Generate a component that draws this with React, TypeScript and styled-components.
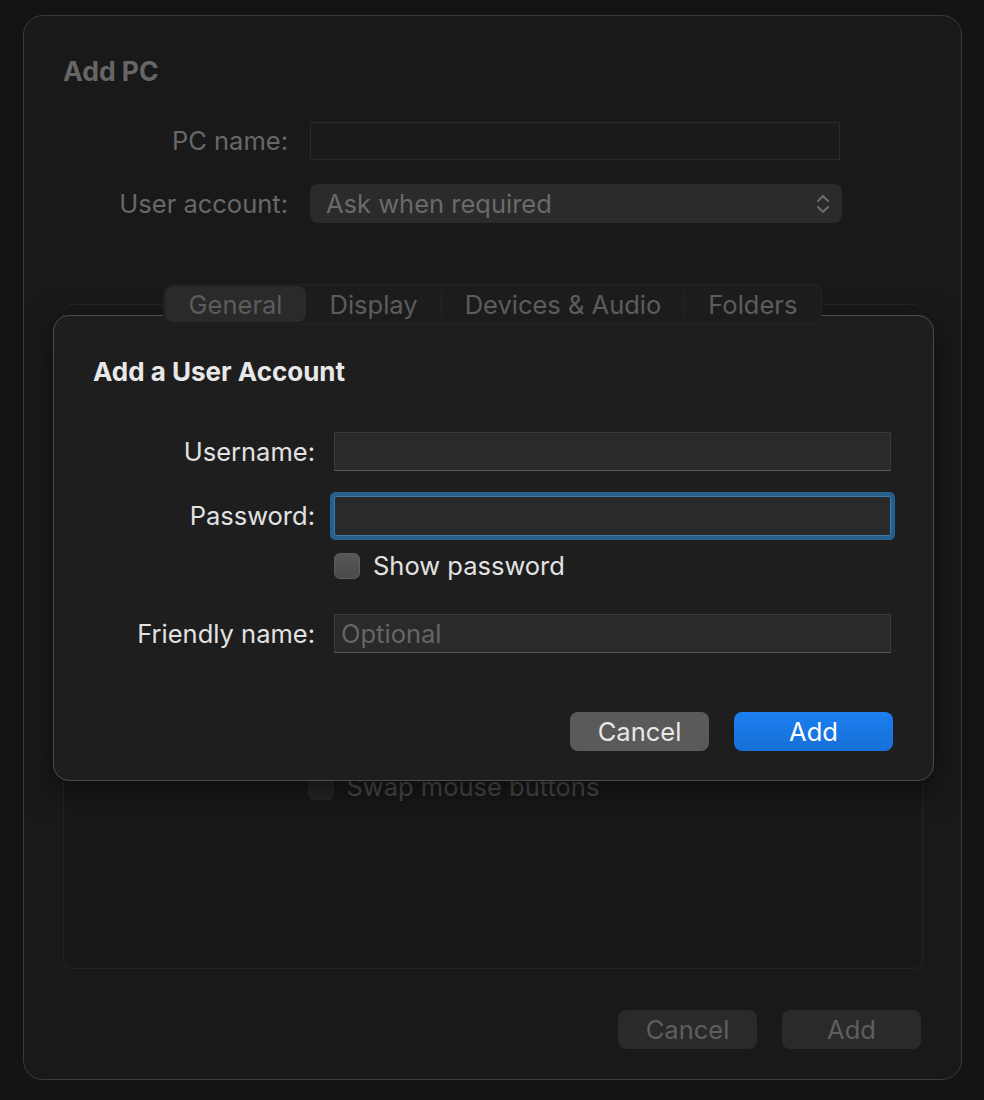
import React from "react";
import styled, { createGlobalStyle } from "styled-components";

const Global = createGlobalStyle`
  html, body { margin: 0; padding: 0; background: #141414; }
  body { font-family: Inter, "Noto Sans", "Liberation Sans", sans-serif; -webkit-font-smoothing: antialiased; }
  * { box-sizing: border-box; }
`;

const BODY = "25.5px";

const Page = styled.div`
  width: 984px;
  height: 1100px;
  padding: 15px 22px 0 23px;
  background: #141414;
`;

const Window = styled.div`
  position: relative;
  width: 939px;
  height: 1065px;
  border-radius: 20px;
  background: #191919;
  border: 1px solid #3b3b3b;
  padding: 40px 39px 0 39px;
  display: flex;
  flex-direction: column;
`;

const WindowTitle = styled.div`
  font-size: 26.5px;
  line-height: 30px;
  font-weight: 700;
  color: #666;
`;

const MainForm = styled.div`
  margin-top: 36px;
  display: grid;
  grid-template-columns: 225px 530px;
  column-gap: 22px;
  row-gap: 24px;
  align-items: center;
`;

const DimLabel = styled.div`
  text-align: right;
  font-size: ${BODY};
  line-height: 30px;
  color: #686868;
`;

const DimField = styled.div`
  height: 38px;
  background: #1b1b1b;
  border: 1px solid #2a2a2a;
`;

const DimSelect = styled.div`
  height: 39px;
  width: 532px;
  border-radius: 8px;
  background: #2b2b2b;
  display: flex;
  align-items: center;
  justify-content: space-between;
  padding: 0 11px 0 16px;
  font-size: ${BODY};
  color: #6a6a6a;
`;

const TabArea = styled.div`
  margin-top: 61px;
  display: flex;
  flex-direction: column;
  align-items: center;
`;

const Segmented = styled.div`
  position: relative;
  z-index: 1;
  display: flex;
  align-items: stretch;
  height: 40px;
  margin-bottom: -20px;
  padding: 1px;
  border-radius: 9px;
  background: #1c1c1c;
  border: 1px solid #232323;
`;

const Segment = styled.div<{ $active?: boolean; $sep?: boolean }>`
  display: flex;
  align-items: center;
  padding: 0 23px;
  font-size: ${BODY};
  color: #5c5c5c;
  border-radius: 8px;
  background: ${(p) => (p.$active ? "#2a2a2a" : "transparent")};
  border-left: 1px solid ${(p) => (p.$sep ? "#262626" : "transparent")};
`;

const Panel = styled.div`
  width: 860px;
  height: 665px;
  border-radius: 10px;
  background: #181818;
  border: 1px solid #242424;
  padding: 469px 0 0 244px;
`;

const CheckRow = styled.div<{ $dim?: boolean }>`
  display: flex;
  align-items: center;
  gap: 13px;
  height: 26px;
  font-size: ${BODY};
  line-height: 26px;
  color: ${(p) => (p.$dim ? "#4a4a4a" : "#e2e2e2")};
`;

const Check = styled.div<{ $dim?: boolean }>`
  width: 26px;
  height: 26px;
  border-radius: 6px;
  background: ${(p) =>
    p.$dim ? "#262626" : "linear-gradient(#575757, #4b4b4b)"};
  border: 1px solid ${(p) => (p.$dim ? "#2a2a2a" : "#5e5e5e")};
`;

const Footer = styled.div`
  margin-top: 41px;
  display: flex;
  justify-content: flex-end;
  gap: 25px;
  padding-right: 1px;
`;

const DimButton = styled.div`
  width: 139px;
  height: 39px;
  border-radius: 8px;
  background: #2a2a2a;
  color: #5e5e5e;
  font-size: ${BODY};
  display: flex;
  align-items: center;
  justify-content: center;
`;

const Sheet = styled.div`
  position: absolute;
  left: 29px;
  top: 299px;
  width: 881px;
  height: 466px;
  border-radius: 16px;
  background: #1e1e1e;
  border: 1px solid #4c4c4c;
  box-shadow: 0 10px 30px rgba(0, 0, 0, 0.5);
  padding: 41px 40px 0 39px;
  display: flex;
  flex-direction: column;
`;

const SheetTitle = styled.div`
  font-size: 26px;
  line-height: 30px;
  font-weight: 700;
  color: #e8e8e8;
`;

const SheetForm = styled.div`
  margin-top: 45px;
  display: grid;
  grid-template-columns: 222px 557px;
  column-gap: 19px;
  align-items: center;
`;

const Label = styled.div<{ $mt?: number }>`
  text-align: right;
  font-size: ${BODY};
  line-height: 30px;
  color: #e2e2e2;
  margin-top: ${(p) => p.$mt ?? 0}px;
`;

const Field = styled.div<{ $focus?: boolean; $mt?: number }>`
  height: ${(p) => (p.$focus ? 40 : 39)}px;
  margin-top: ${(p) => p.$mt ?? 0}px;
  background: #2a2a2a;
  border: 1px solid ${(p) => (p.$focus ? "#3f79a8" : "#3a3a3a")};
  border-bottom-color: ${(p) => (p.$focus ? "#3f79a8" : "#585858")};
  box-shadow: ${(p) => (p.$focus ? "0 0 0 4px #26608f" : "none")};
  border-radius: ${(p) => (p.$focus ? "2px" : "0")};
  display: flex;
  align-items: center;
  padding-left: 6px;
  font-size: ${BODY};
  color: #666;
`;

const CheckCell = styled.div`
  grid-column: 2;
  margin-top: 17px;
`;

const SheetFooter = styled.div`
  margin-top: 59px;
  display: flex;
  justify-content: flex-end;
  gap: 25px;
`;

const Button = styled.div<{ $primary?: boolean }>`
  width: ${(p) => (p.$primary ? 159 : 139)}px;
  height: 39px;
  border-radius: 8px;
  background: ${(p) =>
    p.$primary ? "linear-gradient(#1c7ff0, #1670d6)" : "#5a5a5a"};
  color: ${(p) => (p.$primary ? "#ffffff" : "#e8e8e8")};
  font-size: ${BODY};
  display: flex;
  align-items: center;
  justify-content: center;
`;

const Chevrons = () => (
  <svg width="16" height="24" viewBox="0 0 16 24" fill="none">
    <path d="M3 9 L8 4 L13 9" stroke="#6a6a6a" strokeWidth="2.2" strokeLinecap="round" strokeLinejoin="round" />
    <path d="M3 15 L8 20 L13 15" stroke="#6a6a6a" strokeWidth="2.2" strokeLinecap="round" strokeLinejoin="round" />
  </svg>
);

export default function App() {
  return (
    <>
      <Global />
      <Page>
        <Window>
          <WindowTitle>Add PC</WindowTitle>
          <MainForm>
            <DimLabel>PC name:</DimLabel>
            <DimField />
            <DimLabel>User account:</DimLabel>
            <DimSelect>
              <span>Ask when required</span>
              <Chevrons />
            </DimSelect>
          </MainForm>
          <TabArea>
            <Segmented>
              <Segment $active>General</Segment>
              <Segment>Display</Segment>
              <Segment $sep>Devices &amp; Audio</Segment>
              <Segment $sep>Folders</Segment>
            </Segmented>
            <Panel>
              <CheckRow $dim>
                <Check $dim />
                <span>Swap mouse buttons</span>
              </CheckRow>
            </Panel>
          </TabArea>
          <Footer>
            <DimButton>Cancel</DimButton>
            <DimButton>Add</DimButton>
          </Footer>

          <Sheet>
            <SheetTitle>Add a User Account</SheetTitle>
            <SheetForm>
              <Label>Username:</Label>
              <Field />
              <Label $mt={25}>Password:</Label>
              <Field $focus $mt={25} />
              <CheckCell>
                <CheckRow>
                  <Check />
                  <span>Show password</span>
                </CheckRow>
              </CheckCell>
              <Label $mt={35}>Friendly name:</Label>
              <Field $mt={35}>Optional</Field>
            </SheetForm>
            <SheetFooter>
              <Button>Cancel</Button>
              <Button $primary>Add</Button>
            </SheetFooter>
          </Sheet>
        </Window>
      </Page>
    </>
  );
}
